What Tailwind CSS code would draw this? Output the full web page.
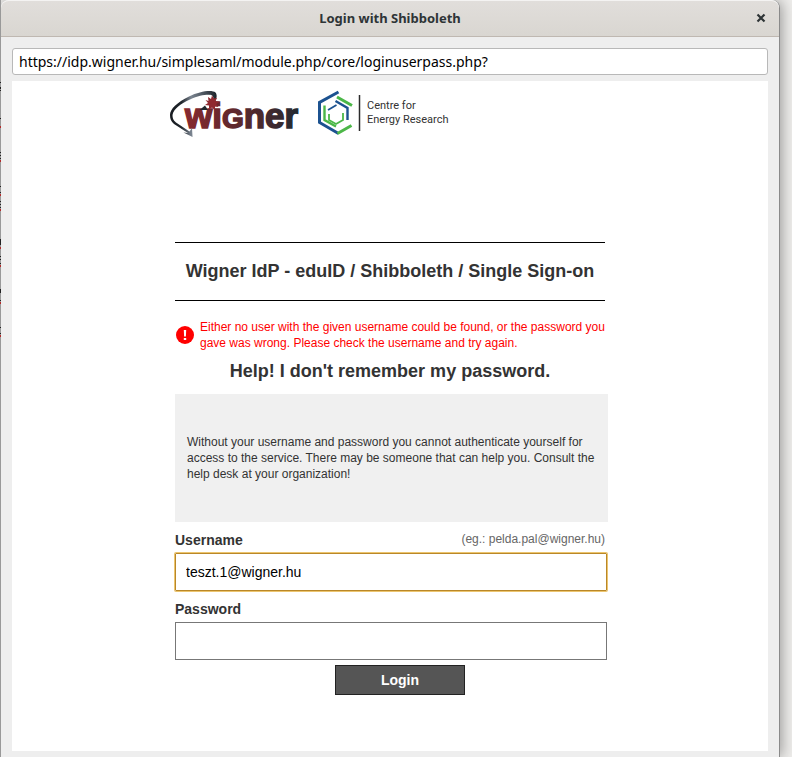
<!DOCTYPE html>
<html lang="en">
<head>
<meta charset="utf-8">
<title>Login with Shibboleth</title>
<script src="https://cdn.jsdelivr.net/npm/@tailwindcss/browser@4"></script>
</head>
<body class="relative flex min-h-screen bg-[#eeedeb] pl-px pr-3 font-['Liberation_Sans',Arial,sans-serif] text-[#333]">
<!-- Desktop content showing at the window's left edge -->
<svg class="absolute left-0 top-0 h-full w-px" aria-hidden="true">
  <rect width="1" height="100%" fill="#999"/>
  <path stroke="#222" d="M.5 82v1M.5 87v2M.5 90v1M.5 118v1M.5 152v1M.5 155v1M.5 158v1M.5 186v1M.5 192v1M.5 201v1M.5 204v1M.5 207v1M.5 239v6M.5 256v1M.5 259v1M.5 263v1M.5 289v4M.5 300v1M.5 327v1M.5 333v1"/>
  <path stroke="#b32a2a" d="M.5 126v2M.5 160v2M.5 194v2M.5 209v2M.5 247v2M.5 265v2M.5 302v2M.5 335v2"/>
</svg>
<div class="flex flex-1 flex-col rounded-t-lg border-r border-[#8a8a8a] bg-[#eee] shadow-[2px_0_14px_rgba(0,0,0,0.35)]">
  <header class="grid h-[37px] grid-cols-[1fr_auto_1fr] items-center rounded-t-lg border-b border-[#bfb8b1] border-t border-t-[#f4f3f2] bg-linear-to-b from-[#e1dedb] to-[#d9d6d1] px-2.5">
    <h1 class="col-start-2 font-['Noto_Sans',sans-serif] text-[13px] font-bold text-[#2e3436]">Login with Shibboleth</h1>
    <button type="button" aria-label="Close" class="justify-self-end p-0.5">
      <svg class="size-3" viewBox="0 0 12 12" fill="none" stroke="#2e3436" stroke-width="2.2"><path d="M2.500 1.500l7 7M9.500 1.500l-7 7"/></svg>
    </button>
  </header>
  <main class="flex flex-1 flex-col gap-1.5 px-[11px] pb-1.5 pt-[11px]">
    <input type="text" aria-label="Address" value="https://idp.wigner.hu/simplesaml/module.php/core/loginuserpass.php?" class="h-[27px] w-full rounded-[3px] border border-[#b8b8b8] bg-white px-1.5 font-['Noto_Sans',sans-serif] text-sm text-black outline-none">
    <section class="flex-1 bg-white">
      <div class="mx-auto w-[430px]">
        <div class="-ml-[6px] flex h-[161px] items-start gap-4 pt-2">
          <svg class="h-12 w-[132px]" viewBox="0 0 132 48" role="img" aria-label="Wigner">
            <defs>
              <linearGradient id="word" gradientUnits="userSpaceOnUse" x1="17" y1="0" x2="129" y2="0"><stop offset="0" stop-color="#86292f"/><stop offset=".3" stop-color="#6b282d"/><stop offset=".7" stop-color="#47292e"/><stop offset="1" stop-color="#232a32"/></linearGradient>
              <linearGradient id="arc" x1="0" y1="0" x2="1" y2="0"><stop offset="0" stop-color="#171b20"/><stop offset=".25" stop-color="#20262c"/><stop offset=".45" stop-color="#7b8591"/><stop offset="1" stop-color="#1b2229"/></linearGradient>
            </defs>
            <text x="16" y="39" fill="url(#word)" stroke="url(#word)" stroke-width="1.500" font-family="Liberation Sans, Arial, sans-serif" font-weight="700" font-size="35">wi<tspan font-size="28">G</tspan>ner</text>
            <path fill="url(#arc)" d="M44.500 15.500C48 10 48.500 6 46.500 3.500 43 .5 31 2 20 7.500 8 13.500 1 20 1 26 1 30 2 32.500 5 35L19 44 14.500 43.500 23.500 48 23 39 20.500 42.500 7 33.500C4 31 3.500 29 3.500 26 4.500 20 12 14.500 21 10.500 31 6 40 5 43 6.500c2 1.500 1.500 3 0 6z"/>
            <path fill="#20262c" d="M30.500 21l5.500-4.500 3 4.500z"/>
            <path fill="#8f2930" d="M36.500 11l3 1-.5-4 3 2 1-3.500 2 3 3-.5-1.500 3 4 1-3.500 2 2.500 3-3.500-.5 0 4-3-3-3 2 0-4-4-.5 3-2z"/>
          </svg>
          <svg class="h-12 w-[132px]" viewBox="0 0 132 48" role="img" aria-label="Centre for Energy Research">
            <g fill="none" stroke-width="3">
              <path stroke="#1c5290" d="M21.500 3L2.500 13.500V33.500L21.500 44.500"/>
              <path stroke="#4cb748" d="M20 8L35 16.500M20.500 44.500L34.500 36.500"/>
              <path stroke="#4cb748" stroke-width="2.400" d="M7.500 16.500V31L19 37.500"/>
              <path stroke="#1c5290" stroke-width="2.400" d="M18.500 12L30.500 19V31"/>
              <path stroke="#1c5290" stroke-width="1.800" d="M11 21L19.500 16"/>
              <path stroke="#4cb748" stroke-width="1.800" d="M12 25v6l7 4 7-4v-7"/>
            </g>
            <path stroke="#2b2b2b" stroke-width="1.500" d="M42.500 6v36"/>
            <g fill="#333" font-family="Roboto, sans-serif" font-size="11"><text x="50" y="20">Centre for</text><text x="50" y="34">Energy Research</text></g>
          </svg>
        </div>
        <h2 class="border-y border-black py-4 text-center text-lg leading-[25px] font-bold">Wigner IdP - eduID / Shibboleth / Single Sign-on</h2>
        <div role="alert" class="mt-[18px] flex items-center gap-[5px] text-xs leading-4 text-[#f00]">
          <svg class="size-5 shrink-0" viewBox="0 0 20 20" aria-hidden="true"><circle cx="10" cy="10" r="9" fill="#f00"/><path fill="#fff" d="M8.800 5h2.400l-.3 6.500H9.100zM8.800 13h2.400v2H8.800z"/></svg>
          <p class="-mr-1">Either no user with the given username could be found, or the password you gave was wrong. Please check the username and try again.</p>
        </div>
        <h2 class="pt-2 text-center text-lg leading-6 font-bold">Help! I don't remember my password.</h2>
        <p class="-mr-[3px] mt-[11px] bg-[#f0f0f0] px-3 py-10 text-xs leading-4">Without your username and password you cannot authenticate yourself for access to the service. There may be someone that can help you. Consult the help desk at your organization!</p>
        <form class="-mr-0.5 flex flex-col pt-2">
          <div class="flex items-start justify-between pr-0.5">
            <label for="user" class="text-sm leading-5 font-bold">Username</label>
            <span class="text-xs leading-[18px] text-[#666]">(eg.: pelda.pal@wigner.hu)</span>
          </div>
          <input id="user" type="text" value="teszt.1@wigner.hu" class="mt-[3px] h-[38px] rounded-[1px] border border-[#b98728] px-2.5 text-sm text-black shadow-[0_0_0_1px_#ecc56f] outline-none">
          <label for="pass" class="mt-2 text-sm leading-5 font-bold">Password</label>
          <input id="pass" type="password" class="mt-[3px] h-[38px] border border-[#777] px-2.5 text-sm text-black outline-none">
          <button type="submit" class="ml-40 mt-[5px] h-[30px] w-[130px] border border-[#222] bg-[#555] text-sm font-bold text-white">Login</button>
        </form>
      </div>
    </section>
  </main>
</div>
</body>
</html>
